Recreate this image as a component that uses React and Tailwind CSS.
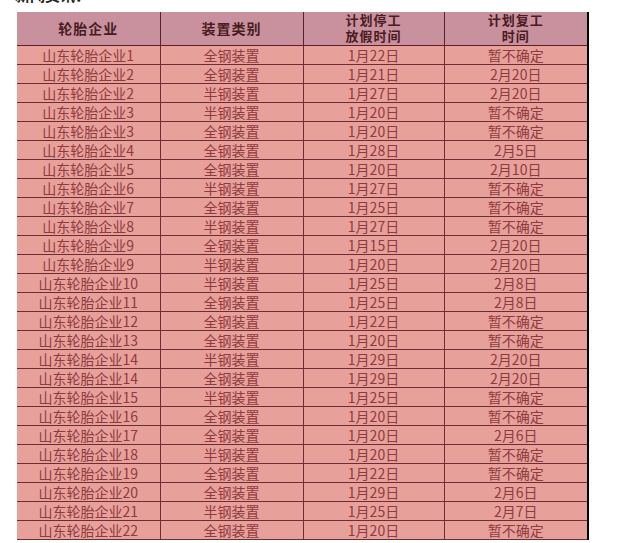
import React from "react";

const rows = [
  ["山东轮胎企业1", "全钢装置", "1月22日", "暂不确定"],
  ["山东轮胎企业2", "全钢装置", "1月21日", "2月20日"],
  ["山东轮胎企业2", "半钢装置", "1月27日", "2月20日"],
  ["山东轮胎企业3", "半钢装置", "1月20日", "暂不确定"],
  ["山东轮胎企业3", "全钢装置", "1月20日", "暂不确定"],
  ["山东轮胎企业4", "全钢装置", "1月28日", "2月5日"],
  ["山东轮胎企业5", "全钢装置", "1月20日", "2月10日"],
  ["山东轮胎企业6", "半钢装置", "1月27日", "暂不确定"],
  ["山东轮胎企业7", "全钢装置", "1月25日", "暂不确定"],
  ["山东轮胎企业8", "半钢装置", "1月27日", "暂不确定"],
  ["山东轮胎企业9", "全钢装置", "1月15日", "2月20日"],
  ["山东轮胎企业9", "半钢装置", "1月20日", "2月20日"],
  ["山东轮胎企业10", "半钢装置", "1月25日", "2月8日"],
  ["山东轮胎企业11", "全钢装置", "1月25日", "2月8日"],
  ["山东轮胎企业12", "全钢装置", "1月22日", "暂不确定"],
  ["山东轮胎企业13", "全钢装置", "1月20日", "暂不确定"],
  ["山东轮胎企业14", "半钢装置", "1月29日", "2月20日"],
  ["山东轮胎企业14", "全钢装置", "1月29日", "2月20日"],
  ["山东轮胎企业15", "半钢装置", "1月25日", "暂不确定"],
  ["山东轮胎企业16", "全钢装置", "1月20日", "暂不确定"],
  ["山东轮胎企业17", "全钢装置", "1月20日", "2月6日"],
  ["山东轮胎企业18", "半钢装置", "1月20日", "暂不确定"],
  ["山东轮胎企业19", "全钢装置", "1月22日", "暂不确定"],
  ["山东轮胎企业20", "全钢装置", "1月29日", "2月6日"],
  ["山东轮胎企业21", "半钢装置", "1月25日", "2月7日"],
  ["山东轮胎企业22", "全钢装置", "1月20日", "暂不确定"],
];

const font = { fontFamily: '"Noto Sans CJK SC", "DejaVu Sans", sans-serif' };

const App = () => {
  return (
    <div className="w-[638px] h-[543px] bg-white overflow-hidden" style={font}>
      <div className="h-[5px] overflow-hidden pl-[15px]">
        <div className="-mt-[13px] text-[15px] font-bold leading-[16px] text-[#222]">新闻资讯：</div>
      </div>
      <div className="ml-[17px] mt-[7px] w-[572px] border-r-2 border-black">
        <table className="border-collapse table-fixed w-[570px] text-center">
          <colgroup>
            <col className="w-[143px]" />
            <col className="w-[143px]" />
            <col className="w-[141px]" />
            <col className="w-[143px]" />
          </colgroup>
          <thead>
            <tr className="h-[33px] bg-[#c9919e] text-[#4a1c22] text-[13px] font-bold leading-[16px] tracking-[1px]">
              <th className="p-0 border-r-[1.5px] border-b-[1.5px] border-[#5a2228] text-[14px]">轮胎企业</th>
              <th className="p-0 border-r-[1.5px] border-b-[1.5px] border-[#5a2228] text-[14px]">装置类别</th>
              <th className="p-0 border-r-[1.5px] border-b-[1.5px] border-[#5a2228]">
                <div>计划停工</div>
                <div>放假时间</div>
              </th>
              <th className="p-0 border-b-[1.5px] border-[#5a2228]">
                <div>计划复工</div>
                <div>时间</div>
              </th>
            </tr>
          </thead>
          <tbody>
            {rows.map((r, i) => (
              <tr key={i} className="h-[19px] bg-[#e8a09b] text-[#8e3b3e] text-[14px] leading-[16px]">
                {r.map((c, j) => (
                  <td
                    key={j}
                    className={
                      j < 3
                        ? "p-0 border-r-[1.5px] border-b-[1.5px] border-[#6e2d32]"
                        : "p-0 border-b-[1.5px] border-[#6e2d32]"
                    }
                  >
                    {c}
                  </td>
                ))}
              </tr>
            ))}
          </tbody>
        </table>
      </div>
    </div>
  );
};

export default App;
